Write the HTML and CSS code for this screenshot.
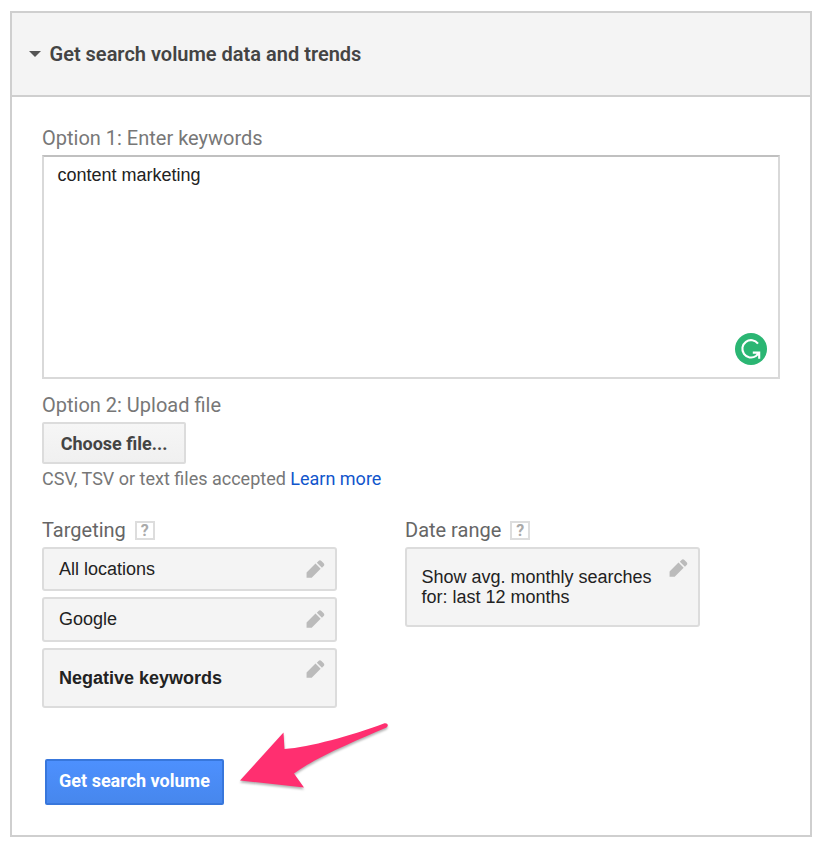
FILE: index.html
```html
<!DOCTYPE html>
<html lang="en">
<head>
<meta charset="utf-8">
<title>Get search volume data and trends</title>
<link rel="stylesheet" href="styles.css">
</head>
<body>
<svg class="defs" width="0" height="0" aria-hidden="true">
  <symbol id="pencil" viewBox="0 0 20 20">
    <path d="M.6 13.2 10 3.8l5.4 5.4L6 18.8H.6zM11.4 2.8 13.2 1c.9-.9 2.1-.9 3 0l2.4 2.4c.9.9.9 2.1 0 3l-1.8 1.8z"/>
  </symbol>
</svg>
<main class="panel">
  <header class="panel-header">
    <span class="caret"></span>
    <h1 class="title">Get search volume data and trends</h1>
  </header>
  <div class="panel-body">
    <div class="label label-first">Option 1: Enter keywords</div>
    <div class="keywords">content marketing
      <svg class="badge" viewBox="0 0 32 32"><circle cx="16" cy="16" r="16" fill="#2bb673"/><path d="M23 10.6A8.7 8.7 0 1 0 21 23L23.8 20.2M17.8 19.6h6.4V25.8" fill="none" stroke="#fff" stroke-width="2.1"/></svg>
    </div>
    <div class="label label-second">Option 2: Upload file</div>
    <button class="choose">Choose file...</button>
    <div class="hint">CSV, TSV or text files accepted <a>Learn more</a></div>
    <div class="columns">
      <section class="column">
        <div class="label">Targeting<span class="help">?</span></div>
        <div class="box box-a">All locations<svg class="pencil"><use href="#pencil"/></svg></div>
        <div class="box box-b">Google<svg class="pencil"><use href="#pencil"/></svg></div>
        <div class="box box-c">Negative keywords<svg class="pencil"><use href="#pencil"/></svg></div>
      </section>
      <section class="column">
        <div class="label">Date range<span class="help">?</span></div>
        <div class="box box-d"><span>Show avg. monthly searches<br>for: last 12 months</span><svg class="pencil"><use href="#pencil"/></svg></div>
      </section>
    </div>
    <div class="actions">
      <button class="submit">Get search volume</button>
      <svg class="arrow" viewBox="0 0 160 80"><path d="M5 60.5 48.5 12.5 49.5 29C75 27 115 16 149.5 3.2 153 2.7 154 6 151 7.8 122 20 80 38 59 53.5L69 67.5z"/></svg>
    </div>
  </div>
</main>
</body>
</html>
```

FILE: styles.css
```css
* { box-sizing: border-box; }
body { margin: 0; background: #fff; font-family: Roboto, sans-serif; white-space: nowrap; }
.defs { position: absolute; }
button { padding: 0; font-family: inherit; white-space: nowrap; }
.panel { width: 802px; height: 826px; margin: 11px 0 0 10px; border: 2px solid #cfcfcf; }
.panel-header { display: flex; align-items: center; height: 84px; padding: 0 0 0 17px; border-bottom: 2px solid #cfcfcf; background: #f4f4f4; }
.caret { border: 6px solid transparent; border-top-color: #555; border-bottom: 0; margin-right: 8.5px; }
.title { margin: 0; color: #444; font-size: 20px; font-weight: 600; line-height: 24px; }
.panel-body { padding: 29px 30px 0; }
.label { display: flex; align-items: center; height: 24px; color: #777; font-size: 20px; line-height: 24px; }
.label-first { margin-bottom: 5px; }
.keywords { position: relative; width: 738px; height: 224px; padding: 7px 13.5px; border: 2px solid #d9d9d9; border-top-color: #c0c0c0; color: #222; font: 18px/22px "Liberation Sans", sans-serif; }
.badge { position: absolute; right: 11px; bottom: 12px; width: 32px; height: 32px; }
.label-second { margin: 14px 0 5px; }
.choose { display: block; width: 144px; height: 42px; border: 2px solid #dcdcdc; border-radius: 2px; background: linear-gradient(#f6f6f6, #f0f0f0); color: #444; font-size: 18px; font-weight: 700; }
.hint { height: 22px; margin-top: 4px; color: #777; font-size: 18px; line-height: 22px; }
.hint a { color: #15c; }
.columns { display: flex; gap: 68px; height: 190px; margin-top: 28px; }
.column { width: 295px; }
.column .label { margin-bottom: 5px; color: #666; }
.help { width: 20px; height: 19px; margin-left: 9px; border: 2px solid #ddd; color: #aaa; font-size: 16px; font-weight: 700; line-height: 16px; text-align: center; }
.box { display: flex; align-items: center; justify-content: space-between; padding: 0 10px 0 15px; border: 2px solid #dcdcdc; border-radius: 3px; background: #f4f4f4; color: #222; font: 18px/20px "Liberation Sans", sans-serif; }
.box-a { height: 44px; margin-bottom: 6px; }
.box-b { height: 45px; margin-bottom: 6px; padding-bottom: 1px; }
.box-c { height: 60px; font-weight: 700; }
.box-d { height: 80px; padding-left: 14.5px; }
.pencil { width: 19px; height: 19px; fill: #bbb; }
.box-c .pencil, .box-d .pencil { align-self: flex-start; margin-top: 10px; }
.actions { display: flex; gap: 10.5px; margin: 12px 0 0 3px; }
.submit { width: 179px; height: 46px; margin-top: 39px; padding-bottom: 3px; border: 2px solid #3877dc; border-radius: 2px; background: linear-gradient(#4d90fe, #4787ed); color: #fff; font-size: 18px; font-weight: 700; }
.arrow { width: 160px; height: 80px; fill: #ff2f70; filter: drop-shadow(0 2px 1px rgba(0, 0, 0, .3)); }
```
